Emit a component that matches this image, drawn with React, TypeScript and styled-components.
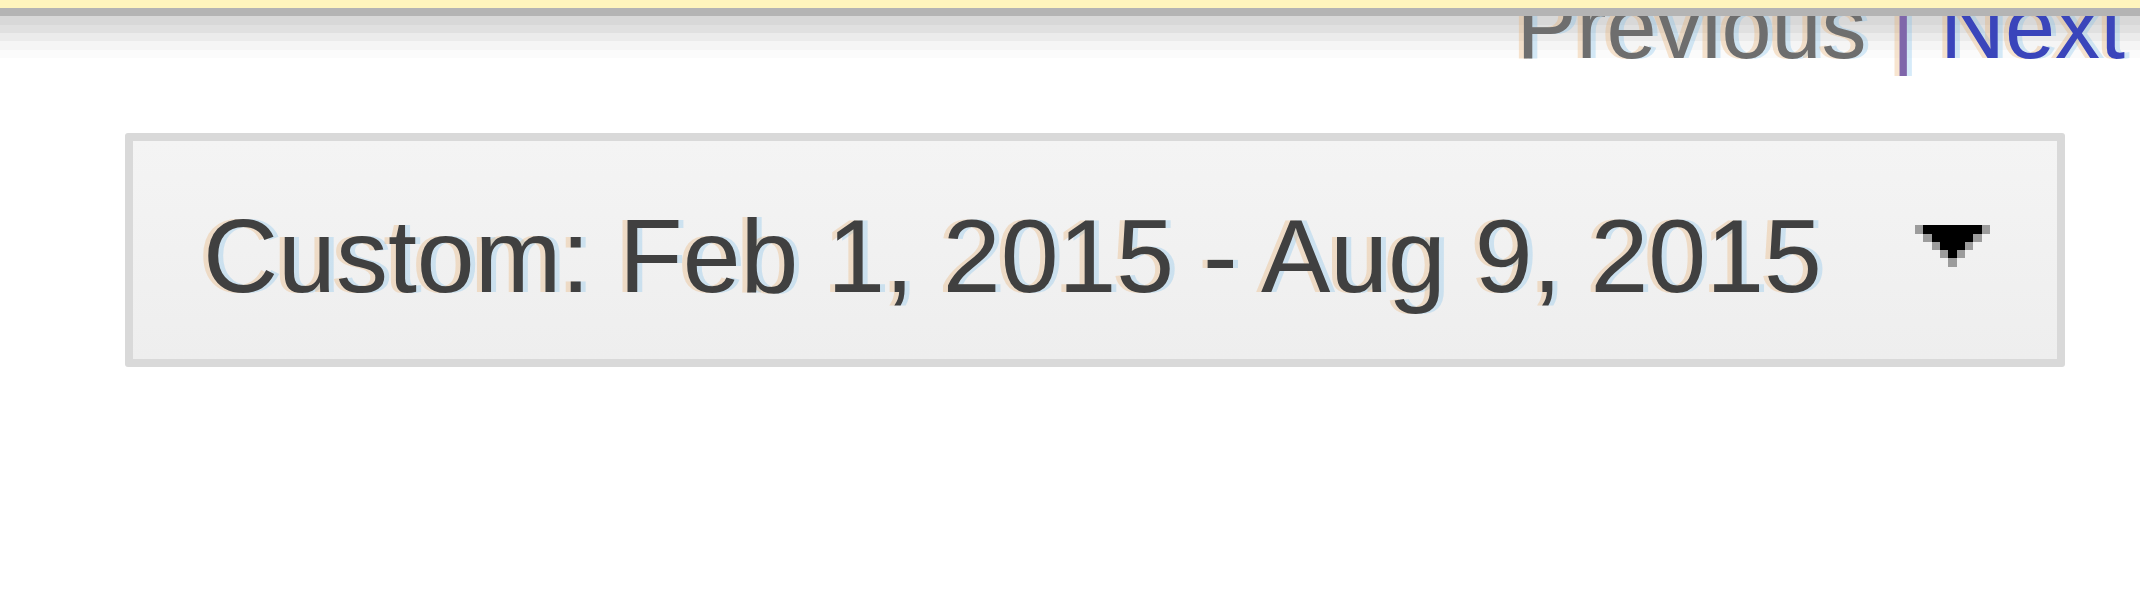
import React from 'react';
import styled, { createGlobalStyle } from 'styled-components';

const GlobalStyle = createGlobalStyle`
  html, body {
    margin: 0;
    padding: 0;
    background: #ffffff;
  }
  body {
    font-family: "Liberation Sans", Arial, sans-serif;
  }
`;

// blown-up subpixel render: warm fringe left of a stroke, cool fringe right
const fringe = `
  text-shadow: -5px 0 rgba(232, 170, 100, 0.3), 5px 0 rgba(120, 190, 236, 0.3);
`;

const Page = styled.div`
  display: flex;
  flex-direction: column;
  width: 2140px;
`;

const TopBar = styled.div`
  height: 8px;
  background: #fff5bd;
  border-bottom: 8px solid #b4b4b4;
`;

const NavRow = styled.div`
  height: 60px;
  overflow: hidden;
  display: flex;
  justify-content: flex-end;
  padding-right: 15px;
  background: linear-gradient(
    to bottom,
    #d8d8d8 0px,
    #d8d8d8 9px,
    #e0e0e0 9px,
    #e0e0e0 17px,
    #ebebeb 17px,
    #ebebeb 25px,
    #f5f5f5 25px,
    #f5f5f5 34px,
    #fbfbfb 34px,
    #fbfbfb 42px,
    #ffffff 42px
  );
`;

const NavText = styled.div`
  font-size: 90px;
  line-height: 22px;
  white-space: pre;
  ${fringe}
`;

const NavLink = styled.span<{ $active?: boolean }>`
  color: ${(p) => (p.$active ? '#3a45bb' : '#6e6e6e')};
`;

const Divider = styled.span`
  color: #7f66aa;
`;

const RangeBox = styled.div`
  margin: 57px 0 0 125px;
  width: 1940px;
  box-sizing: border-box;
  border: 8px solid #d9d9d9;
  border-radius: 3px;
  background: linear-gradient(to bottom, #f4f4f4, #eeeeee);
  display: flex;
  align-items: flex-start;
  justify-content: space-between;
  padding: 57px 67px 45px 70px;
`;

const RangeLabel = styled.span`
  font-size: 104px;
  line-height: 116px;
  color: #404040;
  white-space: nowrap;
  ${fringe}
`;

const Caret = styled.svg`
  margin-top: 27px;
  flex-shrink: 0;
`;

const caretRows = [
  { gray: [0, 8], black: [1, 7] },
  { gray: [1, 7], black: [2, 5] },
  { gray: [2, 6], black: [3, 3] },
  { gray: [3, 5], black: [4, 1] },
  { gray: [4], black: null as number[] | null },
];

const DropCaret = () => (
  <Caret width="75" height="42" viewBox="0 0 9 5" shapeRendering="crispEdges">
    {caretRows.map((row, y) => (
      <g key={y}>
        {row.gray.map((x) => (
          <rect key={x} x={x} y={y} width="1" height="1" fill="#9c9c9c" />
        ))}
        {row.black && (
          <rect x={row.black[0]} y={y} width={row.black[1]} height="1" fill="#000000" />
        )}
      </g>
    ))}
  </Caret>
);

const App = () => {
  return (
    <Page>
      <GlobalStyle />
      <TopBar />
      <NavRow>
        <NavText>
          <NavLink>Previous</NavLink>
          <Divider> | </Divider>
          <NavLink $active>Next</NavLink>
        </NavText>
      </NavRow>
      <RangeBox>
        <RangeLabel>Custom: Feb 1, 2015 - Aug 9, 2015</RangeLabel>
        <DropCaret />
      </RangeBox>
    </Page>
  );
};

export default App;
